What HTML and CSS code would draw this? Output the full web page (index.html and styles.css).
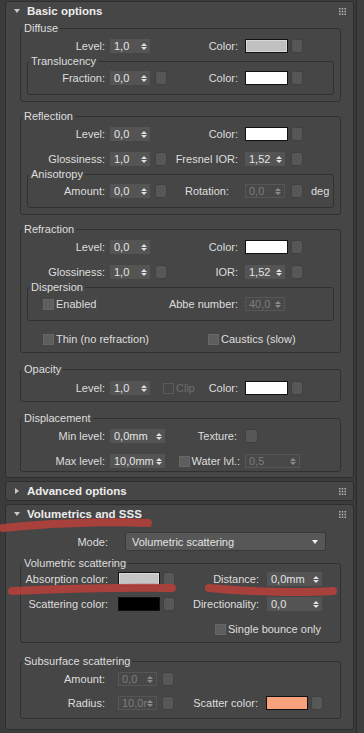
FILE: index.html
```html
<!DOCTYPE html>
<html lang="en">
<head>
    <meta charset="UTF-8">
    <meta name="viewport" content="width=device-width, initial-scale=1.0">
    <title>Material options</title>
    <link rel="stylesheet" href="styles.css">
</head>
<body>

<div class="app">
    <div class="panel">

        <section class="rollout">
            <div class="roll-head"><i class="tri"></i><span class="roll-title">Basic options</span><svg class="grip" width="7" height="7" viewBox="0 0 7 7"><path d="M0 0h1.5v1.5H0zM2.75 0h1.5v1.5h-1.5zM5.5 0H7v1.5H5.5zM0 2.75h1.5v1.5H0zM2.75 2.75h1.5v1.5h-1.5zM5.5 2.75H7v1.5H5.5zM0 5.5h1.5V7H0zM2.75 5.5h1.5V7h-1.5zM5.5 5.5H7V7H5.5z"/></svg></div>
            <div class="roll-body">

                <fieldset class="grp">
                    <legend>Diffuse</legend>
                    <div class="row">
                        <span class="la">Level:</span><span class="spin">1,0<i class="arr"></i></span><i class="map off"></i>
                        <span class="lb">Color:</span><i class="swatch grey"></i><i class="map"></i>
                    </div>
                    <fieldset class="grp sub">
                        <legend>Translucency</legend>
                        <div class="row">
                            <span class="la">Fraction:</span><span class="spin">0,0<i class="arr"></i></span><i class="map"></i>
                            <span class="lb">Color:</span><i class="swatch white"></i><i class="map"></i>
                        </div>
                    </fieldset>
                </fieldset>

                <fieldset class="grp">
                    <legend>Reflection</legend>
                    <div class="row">
                        <span class="la">Level:</span><span class="spin">0,0<i class="arr"></i></span><i class="map off"></i>
                        <span class="lb">Color:</span><i class="swatch white"></i><i class="map"></i>
                    </div>
                    <div class="row">
                        <span class="la">Glossiness:</span><span class="spin">1,0<i class="arr"></i></span><i class="map"></i>
                        <span class="lb">Fresnel IOR:</span><span class="spin">1,52<i class="arr"></i></span><i class="map"></i>
                    </div>
                    <fieldset class="grp sub">
                        <legend>Anisotropy</legend>
                        <div class="row">
                            <span class="la">Amount:</span><span class="spin">0,0<i class="arr"></i></span><i class="map"></i>
                            <span class="lb lb-rot">Rotation:</span><span class="spin dis">0,0<i class="arr"></i></span><i class="map"></i><span class="unit">deg</span>
                        </div>
                    </fieldset>
                </fieldset>

                <fieldset class="grp">
                    <legend>Refraction</legend>
                    <div class="row">
                        <span class="la">Level:</span><span class="spin">0,0<i class="arr"></i></span><i class="map off"></i>
                        <span class="lb">Color:</span><i class="swatch white"></i><i class="map"></i>
                    </div>
                    <div class="row">
                        <span class="la">Glossiness:</span><span class="spin">1,0<i class="arr"></i></span><i class="map"></i>
                        <span class="lb">IOR:</span><span class="spin">1,52<i class="arr"></i></span><i class="map"></i>
                    </div>
                    <fieldset class="grp sub">
                        <legend>Dispersion</legend>
                        <div class="row">
                            <span class="opt opt-enabled"><i class="chk"></i>Enabled</span>
                            <span class="lb">Abbe number:</span><span class="spin dis">40,0<i class="arr"></i></span>
                        </div>
                    </fieldset>
                    <div class="row">
                        <span class="opt opt-thin"><i class="chk"></i>Thin (no refraction)</span>
                        <span class="opt"><i class="chk"></i>Caustics (slow)</span>
                    </div>
                </fieldset>

                <fieldset class="grp g-opacity">
                    <legend>Opacity</legend>
                    <div class="row">
                        <span class="la">Level:</span><span class="spin">1,0<i class="arr"></i></span>
                        <span class="opt dis opt-clip"><i class="chk"></i>Clip</span>
                        <span class="lb lb-short">Color:</span><i class="swatch white"></i><i class="map"></i>
                    </div>
                </fieldset>

                <fieldset class="grp g-disp">
                    <legend>Displacement</legend>
                    <div class="row">
                        <span class="la">Min level:</span><span class="spin wide">0,0mm<i class="arr"></i></span>
                        <span class="lb lb-disp">Texture:</span><i class="map tex"></i>
                    </div>
                    <div class="row">
                        <span class="la">Max level:</span><span class="spin wide">10,0mm<i class="arr"></i></span>
                        <span class="lb lb-disp lb-water"><i class="chk"></i>Water lvl.:</span><span class="spin wide dis">0,5<i class="arr"></i></span>
                    </div>
                </fieldset>

            </div>
        </section>

        <section class="rollout">
            <div class="roll-head"><i class="tri right"></i><span class="roll-title">Advanced options</span><svg class="grip" width="7" height="7" viewBox="0 0 7 7"><path d="M0 0h1.5v1.5H0zM2.75 0h1.5v1.5h-1.5zM5.5 0H7v1.5H5.5zM0 2.75h1.5v1.5H0zM2.75 2.75h1.5v1.5h-1.5zM5.5 2.75H7v1.5H5.5zM0 5.5h1.5V7H0zM2.75 5.5h1.5V7h-1.5zM5.5 5.5H7V7H5.5z"/></svg></div>
        </section>

        <section class="rollout">
            <div class="roll-head"><i class="tri"></i><span class="roll-title">Volumetrics and SSS</span><svg class="grip" width="7" height="7" viewBox="0 0 7 7"><path d="M0 0h1.5v1.5H0zM2.75 0h1.5v1.5h-1.5zM5.5 0H7v1.5H5.5zM0 2.75h1.5v1.5H0zM2.75 2.75h1.5v1.5h-1.5zM5.5 2.75H7v1.5H5.5zM0 5.5h1.5V7H0zM2.75 5.5h1.5V7h-1.5zM5.5 5.5H7V7H5.5z"/></svg></div>
            <div class="roll-body vol-body">
                <div class="mode-row">
                    <span class="mode-lbl">Mode:</span>
                    <span class="drop">Volumetric scattering<i class="drop-arr"></i></span>
                </div>

                <fieldset class="grp vol">
                    <legend>Volumetric scattering</legend>
                    <div class="row">
                        <span class="la">Absorption color:</span><i class="swatch light"></i><i class="map"></i>
                        <span class="lb">Distance:</span><span class="spin wide">0,0mm<i class="arr"></i></span>
                    </div>
                    <div class="row">
                        <span class="la">Scattering color:</span><i class="swatch black"></i><i class="map"></i>
                        <span class="lb">Directionality:</span><span class="spin wide">0,0<i class="arr"></i></span>
                    </div>
                    <div class="row">
                        <span class="opt opt-single"><i class="chk"></i>Single bounce only</span>
                    </div>
                </fieldset>

                <fieldset class="grp vol sss">
                    <legend>Subsurface scattering</legend>
                    <div class="row">
                        <span class="la">Amount:</span><span class="spin dis">0,0<i class="arr"></i></span><i class="map"></i>
                    </div>
                    <div class="row">
                        <span class="la">Radius:</span><span class="spin dis"><span class="val">10,0r</span><i class="arr"></i></span><i class="map"></i>
                        <span class="lb">Scatter color:</span><i class="swatch salmon"></i><i class="map"></i>
                    </div>
                </fieldset>
            </div>
        </section>

    </div>
    <div class="scroll"></div>

    <svg class="marks" width="364" height="733" viewBox="0 0 364 733">
        <path d="M3 528 C40 524, 100 521, 148 523"/>
        <path d="M12 591 C60 589, 120 587, 172 588"/>
        <path d="M209 588 C250 592, 300 593, 333 591"/>
    </svg>
</div>

</body>
</html>
```

FILE: styles.css
```css
* {
    box-sizing: border-box;
}
html, body {
    margin: 0;
}
body {
    width: 364px;
    height: 733px;
    overflow: hidden;
    background-color: #3b3b3b;
    font-family: "Liberation Sans", Arial, sans-serif;
    font-size: 11px;
    color: #dedede;
}
.app {
    position: relative;
    display: flex;
    height: 733px;
}
.panel {
    flex: 1;
    display: flex;
    flex-direction: column;
    gap: 3px;
    padding: 1px 2px 0 5px;
}
.scroll {
    width: 8px;
    background-color: #3f3f3f;
    border-left: 1px solid #2c2c2c;
}

/* rollouts */
.rollout {
    background-color: #464646;
    border: 1px solid #2e2e2e;
    border-radius: 3px;
}
.roll-head {
    display: flex;
    align-items: center;
    height: 18px;
    padding: 0 7px 0 8px;
}
.tri {
    width: 0;
    height: 0;
    border-left: 3px solid transparent;
    border-right: 3px solid transparent;
    border-top: 4px solid #c8c8c8;
    margin-right: 7px;
}
.tri.right {
    border-top: 3px solid transparent;
    border-bottom: 3px solid transparent;
    border-left: 4px solid #c8c8c8;
    border-right: 0;
    margin-left: 1px;
    margin-right: 8px;
}
.roll-title {
    flex: 1;
    font-weight: bold;
    font-size: 11.5px;
    color: #ececec;
}
.grip {
    fill: #b4b4b4;
}
.roll-body {
    padding: 1px 12px 5px 14px;
}
.vol-body {
    padding-top: 9px;
    padding-bottom: 10px;
}

/* group boxes */
.grp {
    margin: 0;
    padding: 0 0 6px;
    min-width: 0;
    border: 1px solid #313131;
    border-radius: 3px;
}
.grp + .grp {
    margin-top: 7px;
}
.grp legend {
    height: 14px;
    line-height: 14px;
    padding: 0 2px;
    margin-left: 1px;
}
.grp.sub {
    margin: 1px 6px 0;
    padding-bottom: 9px;
}
.grp.g-opacity,
.grp.g-disp {
    margin-top: 9px;
}
.g-opacity legend + .row {
    margin-top: 5px;
}
.grp.g-disp {
    padding-bottom: 3px;
}

.row {
    display: flex;
    align-items: center;
    height: 14px;
    margin-top: 11px;
}
legend + .row {
    margin-top: 4px;
}
.sub legend + .row {
    margin-top: 3px;
}

.la {
    width: 89px;
    padding-right: 5px;
    text-align: right;
    white-space: nowrap;
}
.sub .la {
    width: 82px;
}
.lb {
    width: 78px;
    padding-right: 7px;
    text-align: right;
    white-space: nowrap;
}
.lb-rot {
    padding-right: 16px;
}
.lb-short {
    width: 45px;
}
.lb-disp {
    width: 80px;
    padding-right: 8px;
}
.lb-water {
    display: flex;
    align-items: center;
    justify-content: flex-end;
    gap: 2px;
    padding-right: 5px;
}

/* spinners */
.spin {
    display: flex;
    align-items: center;
    justify-content: space-between;
    width: 40px;
    height: 14px;
    padding: 0 3px 0 4px;
    background-color: #545454;
    color: #e4e4e4;
    overflow: hidden;
}
.spin.wide {
    width: 55px;
}
.spin.dis {
    background-color: #484848;
    border: 1px solid #565656;
    padding-left: 3px;
    color: #7c7c7c;
}
.val {
    flex: 1;
    min-width: 0;
    white-space: nowrap;
}
.arr {
    display: flex;
    flex-direction: column;
    gap: 1px;
    margin-left: 2px;
}
.arr::before,
.arr::after {
    content: "";
    border-left: 3px solid transparent;
    border-right: 3px solid transparent;
}
.arr::before {
    border-bottom: 3px solid #dedede;
}
.arr::after {
    border-top: 3px solid #dedede;
}
.dis .arr::before {
    border-bottom-color: #8a8a8a;
}
.dis .arr::after {
    border-top-color: #8a8a8a;
}

/* small buttons and swatches */
.map {
    width: 12px;
    height: 14px;
    margin-left: 5px;
    background-color: #575757;
    border: 1px solid #404040;
    border-radius: 3px;
}
.map.off {
    visibility: hidden;
}
.lb + .spin + .map {
    margin-left: 6px;
}
.swatch + .map {
    margin-left: 3px;
}
.map.tex {
    width: 13px;
    margin-left: 0;
}
.swatch {
    width: 43px;
    height: 14px;
    border: 1px solid #111;
}
.swatch.grey {
    background-color: #c0c0c0;
    box-shadow: inset 0 0 0 1px #d8d8d8;
}
.swatch.white {
    background-color: #ffffff;
}
.swatch.light {
    background-color: #c4c4c4;
    box-shadow: inset 0 0 0 1px #dadada;
}
.swatch.black {
    background-color: #000000;
}
.swatch.salmon {
    background-color: #f7a27d;
}
.unit {
    margin-left: 8px;
}

/* checkboxes */
.opt {
    display: flex;
    align-items: center;
    gap: 2px;
    white-space: nowrap;
}
.chk {
    width: 11px;
    height: 11px;
    background-color: #5e5e5e;
    border: 1px solid #666;
}
.opt.dis {
    color: #6e6e6e;
}
.opt.dis .chk {
    background-color: transparent;
    border-color: #5a5a5a;
}
.opt-enabled {
    width: 139px;
    padding-left: 15px;
}
.opt-thin {
    width: 187px;
    padding-left: 22px;
}
.opt-clip {
    width: 37px;
    margin-left: 13px;
}
.opt-single {
    margin-left: 194px;
}

/* volumetrics */
.mode-row {
    display: flex;
    align-items: center;
}
.mode-lbl {
    width: 105px;
    padding-right: 17px;
    text-align: right;
}
.drop {
    display: flex;
    align-items: center;
    justify-content: space-between;
    width: 201px;
    height: 19px;
    padding: 0 7px 0 6px;
    background-color: #575757;
    border: 1px solid #393939;
    border-radius: 2px;
    color: #e4e4e4;
}
.drop-arr {
    width: 0;
    height: 0;
    border-left: 3.5px solid transparent;
    border-right: 3.5px solid transparent;
    border-top: 4px solid #f0f0f0;
}
.grp.vol {
    margin-top: 5px;
}
.vol legend + .row {
    margin-top: 2px;
}
.vol .la {
    width: 97px;
    padding-right: 10px;
}
.vol .lb {
    width: 92px;
    padding-right: 8px;
}
.vol .swatch {
    width: 42px;
}
.grp.sss {
    margin-top: 11px;
    padding-bottom: 8px;
}
.sss .row {
    margin-top: 10px;
}
.sss legend + .row {
    margin-top: 4px;
}
.sss .la {
    padding-right: 13px;
}
.sss .spin {
    width: 39px;
}

/* red annotation strokes */
.marks {
    position: absolute;
    top: 0;
    left: 0;
    pointer-events: none;
}
.marks path {
    fill: none;
    stroke: #b23f3a;
    stroke-opacity: 0.9;
    stroke-width: 8;
    stroke-linecap: round;
}
```
